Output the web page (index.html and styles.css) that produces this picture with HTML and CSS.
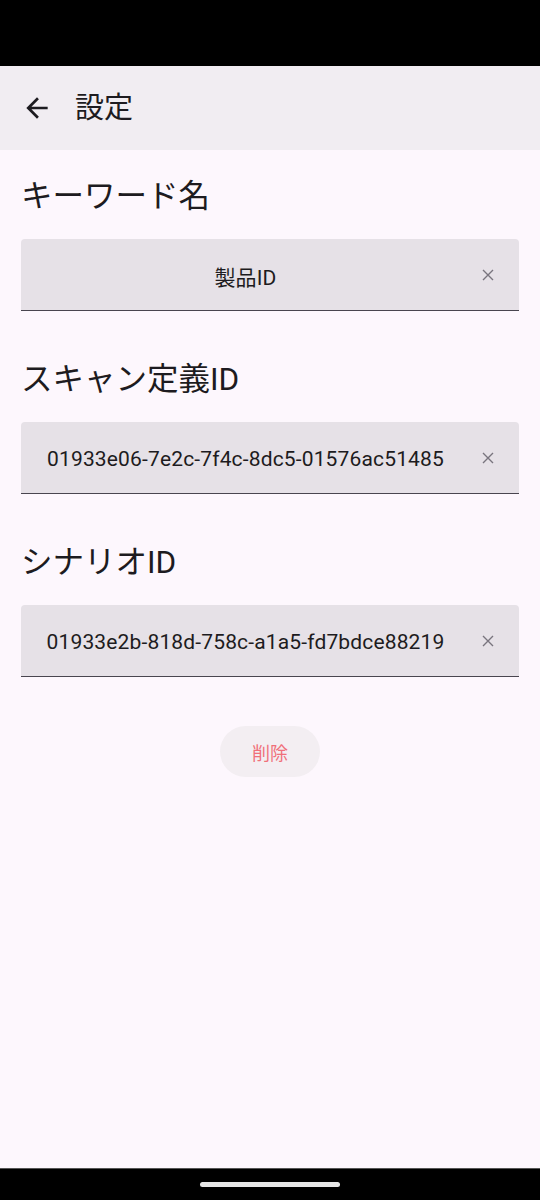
FILE: index.html
```html
<!DOCTYPE html>
<html lang="ja">
<head>
  <meta charset="UTF-8">
  <meta name="viewport" content="width=device-width, initial-scale=1.0">
  <title>設定</title>
  <link rel="stylesheet" href="styles.css">
</head>
<body>
  <div class="status-bar"></div>
  <header class="app-bar">
    <button class="back" aria-label="戻る">
      <svg width="32" height="32" viewBox="0 0 24 24">
        <path d="M20 11H7.83l5.59-5.59L12 4l-8 8 8 8 1.41-1.41L7.83 13H20v-2z" fill="#1d1b20"/>
      </svg>
    </button>
    <h1 class="title">設定</h1>
  </header>
  <main class="content">
    <section class="field-group">
      <h2 class="label">キーワード名</h2>
      <div class="field">
        <span class="value">製品ID</span>
        <span class="clear">
          <svg width="12" height="12" viewBox="0 0 12 12"><path d="M1 1l10 10M11 1L1 11" stroke="#79747e" stroke-width="1.4"/></svg>
        </span>
      </div>
    </section>
    <section class="field-group">
      <h2 class="label">スキャン定義ID</h2>
      <div class="field">
        <span class="value">01933e06-7e2c-7f4c-8dc5-01576ac51485</span>
        <span class="clear">
          <svg width="12" height="12" viewBox="0 0 12 12"><path d="M1 1l10 10M11 1L1 11" stroke="#79747e" stroke-width="1.4"/></svg>
        </span>
      </div>
    </section>
    <section class="field-group">
      <h2 class="label">シナリオID</h2>
      <div class="field">
        <span class="value">01933e2b-818d-758c-a1a5-fd7bdce88219</span>
        <span class="clear">
          <svg width="12" height="12" viewBox="0 0 12 12"><path d="M1 1l10 10M11 1L1 11" stroke="#79747e" stroke-width="1.4"/></svg>
        </span>
      </div>
    </section>
    <div class="actions">
      <button class="delete">削除</button>
    </div>
  </main>
  <div class="nav-bar"><span class="handle"></span></div>
</body>
</html>
```

FILE: styles.css
```css
html, body {
  margin: 0;
  height: 100%;
}
body {
  display: flex;
  flex-direction: column;
  height: 1200px;
  background: #fdf7fd;
  color: #1d1b20;
  font-family: Roboto, "Noto Sans CJK JP", sans-serif;
}
.status-bar {
  height: 66px;
  background: #000;
}
.app-bar {
  height: 84px;
  display: flex;
  align-items: center;
  background: #f1edf2;
}
.back {
  width: 32px;
  height: 32px;
  margin-left: 21px;
  padding: 0;
  border: none;
  background: none;
  display: flex;
}
.title {
  margin: 0 0 0 22px;
  font-size: 29px;
  font-weight: 400;
  line-height: 40px;
}
.content {
  flex: 1;
  padding: 27px 21px 0;
  display: flex;
  flex-direction: column;
  gap: 49px;
}
.label {
  margin: 0 0 22px 0;
  font-size: 31.5px;
  font-weight: 400;
  line-height: 40px;
}
.field {
  height: 71px;
  display: flex;
  align-items: center;
  background: #e6e1e7;
  border-bottom: 1px solid #49454f;
  border-radius: 4px 4px 0 0;
}
.value {
  flex: 1;
  padding: 2px 0 0 6px;
  text-align: center;
  font-size: 21px;
  letter-spacing: 0.15px;
  white-space: nowrap;
}
.clear {
  width: 48px;
  display: flex;
  justify-content: center;
  margin-right: 7px;
}
.actions {
  display: flex;
  justify-content: center;
}
.delete {
  width: 100px;
  height: 51px;
  border: none;
  border-radius: 26px;
  background: #f3eef2;
  color: #f0707a;
  font-family: inherit;
  font-size: 18px;
}
.nav-bar {
  height: 32px;
  background: #000;
  border-top: 1px solid #555;
  box-sizing: border-box;
  display: flex;
  justify-content: center;
  align-items: center;
}
.handle {
  width: 140px;
  height: 5px;
  border-radius: 3px;
  background: #e6e6e6;
}
```
